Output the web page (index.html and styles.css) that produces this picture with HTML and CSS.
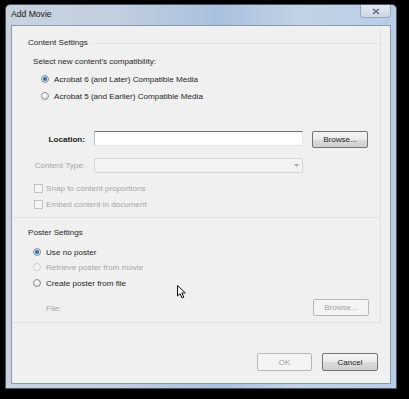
FILE: index.html
```html
<!DOCTYPE html>
<html lang="en">
<head>
  <meta charset="UTF-8">
  <title>Add Movie</title>
  <link rel="stylesheet" href="styles.css">
</head>
<body>
  <div class="window">
    <div class="titlebar">
      <span class="title">Add Movie</span>
      <div class="close">
        <svg width="8" height="7" viewBox="0 0 8 7"><path d="M1 1 L7 6 M7 1 L1 6" stroke="#5b6677" stroke-width="1.4"/></svg>
      </div>
    </div>
    <div class="client">
      <div class="panel">
        <div class="section first">
          <div class="heading">Content Settings</div>
          <div class="row prompt">Select new content's compatibility:</div>
          <div class="row radio-row indent-wide r1">
            <span class="radio checked"></span><span>Acrobat 6 (and Later) Compatible Media</span>
          </div>
          <div class="row radio-row indent-wide r2">
            <span class="radio"></span><span>Acrobat 5 (and Earlier) Compatible Media</span>
          </div>
          <div class="row field-row location">
            <label class="field-label bold">Location:</label>
            <div class="textbox"></div>
            <button class="btn">Browse...</button>
          </div>
          <div class="row field-row ctype">
            <label class="field-label disabled">Content Type:</label>
            <div class="combo">
              <svg width="5" height="3" viewBox="0 0 5 3"><path d="M0 0 H5 L2.5 3 Z" fill="#a8a8a8"/></svg>
            </div>
          </div>
          <div class="row check-row c1">
            <span class="check"></span><span class="disabled">Snap to content proportions</span>
          </div>
          <div class="row check-row c2">
            <span class="check"></span><span class="disabled">Embed content in document</span>
          </div>
        </div>
        <div class="section second">
          <div class="heading">Poster Settings</div>
          <div class="row radio-row p1">
            <span class="radio checked"></span><span>Use no poster</span>
          </div>
          <div class="row radio-row p2">
            <span class="radio off"></span><span class="disabled">Retrieve poster from movie</span>
          </div>
          <div class="row radio-row p3">
            <span class="radio"></span><span>Create poster from file</span>
          </div>
          <div class="row file-row">
            <span class="disabled file-label">File:</span>
            <button class="btn" disabled>Browse...</button>
          </div>
        </div>
      </div>
      <div class="footer">
        <button class="btn" disabled>OK</button>
        <button class="btn">Cancel</button>
      </div>
      <!-- mouse pointer -->
      <svg class="cursor" width="10" height="14" viewBox="0 0 10 14"><path d="M0.5 0.5 V11 L3 8.6 L5 13 L6.8 12.2 L4.9 7.9 H8.3 Z" fill="#fff" stroke="#111" stroke-width="1"/></svg>
    </div>
  </div>
</body>
</html>
```

FILE: styles.css
```css
body {
  margin: 0;
  background-color: #000;
  width: 409px;
  height: 399px;
  overflow: hidden;
  font-family: "Liberation Sans", Arial, sans-serif;
  font-size: 8.1px;
  color: #1e1e1e;
}
.window {
  box-sizing: border-box;
  margin: 4px 0 0 5px;
  width: 392px;
  height: 385px;
  border: 1px solid #4b5767;
  border-radius: 5px 5px 0 0;
  padding: 0 5px 4px 5px;
  display: flex;
  flex-direction: column;
  background: linear-gradient(90deg, #c9d3de 0%, #c0cede 30%, #a9c1de 55%, #c3d2e5 75%, #b9cde6 100%);
}
.titlebar {
  height: 20px;
  display: flex;
  justify-content: space-between;
  align-items: flex-start;
}
.title {
  margin-top: 4px;
  color: #1a1a1a;
  font-size: 8.6px;
}
.close {
  width: 31px;
  height: 13px;
  box-sizing: border-box;
  border: 1px solid #99a8bb;
  border-top: none;
  border-radius: 0 0 4px 4px;
  background: linear-gradient(#e3e9f1, #cdd8e6);
  display: flex;
  justify-content: center;
  align-items: center;
}
.client {
  position: relative;
  flex: 1;
  background-color: #f0f0f0;
  border: 1px solid #8b99ad;
}
.panel {
  width: 368px;
  border-right: 1px solid #e2e2e2;
  border-bottom: 1px solid #e2e2e2;
}
.section {
  display: flex;
  flex-direction: column;
}
.section.first {
  padding: 12px 0 8px 0;
  border-bottom: 1px solid #e2e2e2;
}
.section.second {
  padding: 10px 0 6px 0;
}
.heading {
  height: 10px;
  line-height: 10px;
  padding-left: 16px;
  display: flex;
  align-items: center;
  gap: 4px;
}
.section.first .heading::after {
  content: "";
  flex: 1;
  border-top: 1px solid #e4e4e4;
}
.row {
  display: flex;
  align-items: center;
  height: 10px;
}
.prompt { margin-top: 8px; padding-left: 21px; }
.radio-row { gap: 5px; padding-left: 21px; }
.indent-wide { padding-left: 29px; }
.r1 { margin-top: 8px; }
.r2 { margin-top: 7px; }
.p1 { margin-top: 9px; }
.p2 { margin-top: 5px; }
.p3 { margin-top: 6px; }

.radio {
  box-sizing: border-box;
  width: 8px;
  height: 8px;
  border-radius: 50%;
  border: 1px solid #8a8f96;
  background: radial-gradient(circle at 40% 35%, #ffffff, #d6d6d6);
}
.radio.checked {
  background: radial-gradient(circle, #1d5fa0 0, #3f86c6 1.8px, #e6e6e6 2.4px, #cfcfcf 100%);
}
.radio.off {
  border-color: #cfcfcf;
  background: #f4f4f4;
}
.field-row {
  gap: 9px;
}
.location {
  height: 17px;
  margin-top: 30px;
}
.ctype {
  height: 15px;
  margin-top: 10px;
}
.field-label {
  width: 73px;
  text-align: right;
}
.bold {
  font-weight: bold;
  color: #222;
}
.disabled {
  color: #a6a6a6;
}
.textbox {
  box-sizing: border-box;
  width: 209px;
  height: 15px;
  background-color: #fff;
  border: 1px solid #e2e7ed;
  border-top-color: #6f7378;
  border-left-color: #c0c3c8;
  align-self: flex-start;
}
.combo {
  box-sizing: border-box;
  width: 209px;
  height: 15px;
  border: 1px solid #d6d6d6;
  border-radius: 2px;
  background-color: #f3f3f3;
  display: flex;
  justify-content: flex-end;
  align-items: center;
  padding-right: 3px;
}
.btn {
  box-sizing: border-box;
  width: 56px;
  height: 17px;
  padding: 0;
  font-family: inherit;
  font-size: 8.1px;
  color: #1e1e1e;
  border: 1px solid #737373;
  border-radius: 2px;
  background: linear-gradient(#f4f4f4 0%, #ebebeb 50%, #dcdcdc 51%, #cfcfcf 100%);
}
.btn:disabled {
  color: #a3a3a3;
  border-color: #b5b8bb;
  background: #f4f4f4;
}
.check-row {
  height: 9px;
  gap: 3px;
  padding-left: 22px;
}
.c1 { margin-top: 11px; }
.c2 { margin-top: 7px; }
.check {
  box-sizing: border-box;
  width: 9px;
  height: 9px;
  border: 1px solid #c4c4c4;
  background: #f4f4f4;
}
.file-row {
  height: 17px;
  margin-top: 11px;
  padding-left: 34px;
  justify-content: space-between;
  padding-right: 11px;
}
.file-label {
  margin-top: 1px;
}
.footer {
  display: flex;
  justify-content: flex-end;
  gap: 10px;
  margin-top: 30px;
  padding-right: 12px;
}
.footer .btn {
  height: 18px;
}
.footer .btn:disabled {
  width: 55px;
}
.cursor {
  position: absolute;
  left: 165px;
  top: 259px;
}
```
